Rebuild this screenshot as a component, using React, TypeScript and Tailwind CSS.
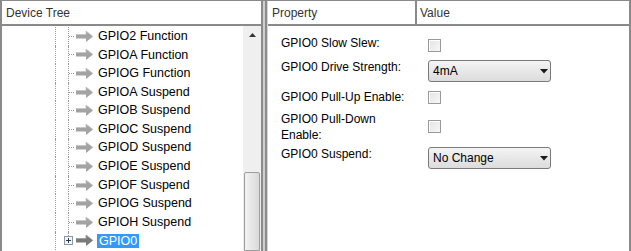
import type { ReactNode } from 'react';

const treeItems = [
  'GPIO2 Function',
  'GPIOA Function',
  'GPIOG Function',
  'GPIOA Suspend',
  'GPIOB Suspend',
  'GPIOC Suspend',
  'GPIOD Suspend',
  'GPIOE Suspend',
  'GPIOF Suspend',
  'GPIOG Suspend',
  'GPIOH Suspend',
];

function Arrow({ dark = false }: { dark?: boolean }) {
  const fill = dark ? '#7a7a7a' : '#a3a3a3';
  return (
    <svg width="17" height="11" viewBox="0 0 17 11" className="shrink-0">
      <path d="M0 3.5 H10 V0 L17 5.5 L10 11 V7.5 H0 Z" fill={fill} />
      <path d="M0 3.5 H10 V0 L17 5.5" fill="none" stroke={dark ? '#9a9a9a' : '#c4c4c4'} strokeWidth="0.8" />
    </svg>
  );
}

function PlusBox() {
  return (
    <svg width="9" height="9" viewBox="0 0 9 9" className="shrink-0">
      <rect x="0.5" y="0.5" width="8" height="8" fill="#f4f6fa" stroke="#8f95a0" />
      <path d="M2 4.5 H7 M4.5 2 V7" stroke="#2b3a55" strokeWidth="1" />
    </svg>
  );
}

function TreeRow({ label }: { label: string }) {
  return (
    <div className="h-[18.6px] flex items-stretch">
      <div className="w-[53px] shrink-0" />
      <div className="w-[13px] shrink-0 border-l border-dotted border-[#9a9a9a]" />
      <div className="w-[8px] shrink-0 border-l border-dotted border-[#9a9a9a] flex items-center">
        <div className="w-[5px] border-t border-dotted border-[#9a9a9a]" />
      </div>
      <div className="flex items-center">
        <Arrow />
      </div>
      <div className="flex items-center pl-[5px] text-[12.5px] text-black whitespace-nowrap">{label}</div>
    </div>
  );
}

function Checkbox() {
  return (
    <div className="w-[13px] h-[13px] border border-[#9a9a9a] bg-gradient-to-br from-[#e4e4e4] to-[#f7f7f7] shadow-[inset_1px_1px_0_#ffffff]" />
  );
}

function Select({ value }: { value: string }) {
  return (
    <div className="w-[123px] h-[22px] rounded-[3px] border border-[#7a7a7a] bg-gradient-to-b from-[#f4f4f4] to-[#dcdcdc] flex items-center pl-[4px] pr-[2px]">
      <span className="flex-1 text-[12px] text-black">{value}</span>
      <svg width="8" height="5" viewBox="0 0 8 5">
        <path d="M0 0 H8 L4 4.5 Z" fill="#1a1a1a" />
      </svg>
    </div>
  );
}

function PropRow({ label, height, children, offset }: { label: ReactNode; height: string; children: ReactNode; offset: string }) {
  return (
    <div className={`flex items-start ${height}`}>
      <div className="w-[147px] pr-[17px] leading-[16px] text-[12px] text-black">{label}</div>
      <div className={offset}>{children}</div>
    </div>
  );
}

export default function App() {
  return (
    <div className="w-[631px] h-[251px] flex bg-white border-t border-[#8a8a8a] overflow-hidden font-['Liberation_Sans',Arial,sans-serif] text-[12px]">
      {/* device tree */}
      <div className="w-[261px] shrink-0 flex flex-col border-l-2 border-[#8a8a8a]">
        <div className="h-[25px] shrink-0 border-b-2 border-[#8a8a8a] flex items-center pl-[4px] text-[#333]">
          Device Tree
        </div>
        <div className="flex-1 flex min-h-0">
          <div className="flex-1 overflow-hidden pt-[1px]">
            {treeItems.map((item) => (
              <TreeRow key={item} label={item} />
            ))}
            <div className="h-[18.6px] flex items-stretch">
              <div className="w-[53px] shrink-0" />
              <div className="w-[9px] shrink-0 border-l border-dotted border-[#9a9a9a]" />
              <div className="flex flex-col items-center w-[9px] shrink-0">
                <div className="flex-1 border-l border-dotted border-[#9a9a9a]" />
                <PlusBox />
                <div className="flex-1" />
              </div>
              <div className="flex items-center pl-[3px]">
                <Arrow dark />
              </div>
              <div className="flex items-center pl-[4px]">
                <span className="bg-[#3399ff] text-white text-[12.5px] leading-[14px] px-[2px]">GPIO0</span>
              </div>
            </div>
          </div>
          <div className="w-[18px] shrink-0 bg-[#efefef] flex flex-col">
            <div className="h-[17px] flex items-center justify-center pl-[1px]">
              <svg width="7" height="4" viewBox="0 0 7 4">
                <path d="M0 4 L3.5 0 L7 4 Z" fill="#333" />
              </svg>
            </div>
            <div className="h-[129px]" />
            <div className="flex-1 mx-[1px] border border-[#9d9d9d] rounded-t-[2px] bg-gradient-to-r from-[#f2f2f2] via-[#e6e6e6] to-[#d9d9d9]" />
          </div>
        </div>
      </div>

      {/* splitter */}
      <div className="w-[6px] shrink-0 border-x-2 border-[#8c8c8c] bg-[#cfcfcf]" />

      {/* properties */}
      <div className="flex-1 flex flex-col border-l border-r-2 border-l-[#d3d9e6] border-r-[#8a8a8a]">
        <div className="h-[25px] shrink-0 border-b-2 border-[#8a8a8a] flex text-[#333]">
          <div className="w-[149px] flex items-center pl-[4px] border-r-2 border-[#8a8a8a]">Property</div>
          <div className="flex items-center pl-[3px]">Value</div>
        </div>
        <div className="pl-[13px] pt-[9px]">
          <PropRow label="GPIO0 Slow Slew:" height="h-[24px]" offset="pt-[4px]">
            <Checkbox />
          </PropRow>
          <PropRow label="GPIO0 Drive Strength:" height="h-[30px]" offset="pt-[1px]">
            <Select value="4mA" />
          </PropRow>
          <PropRow label="GPIO0 Pull-Up Enable:" height="h-[22px]" offset="pt-[2px]">
            <Checkbox />
          </PropRow>
          <PropRow label="GPIO0 Pull-Down Enable:" height="h-[35px]" offset="pt-[9px]">
            <Checkbox />
          </PropRow>
          <PropRow label="GPIO0 Suspend:" height="h-[24px]" offset="pt-[1px]">
            <Select value="No Change" />
          </PropRow>
        </div>
      </div>
    </div>
  );
}
